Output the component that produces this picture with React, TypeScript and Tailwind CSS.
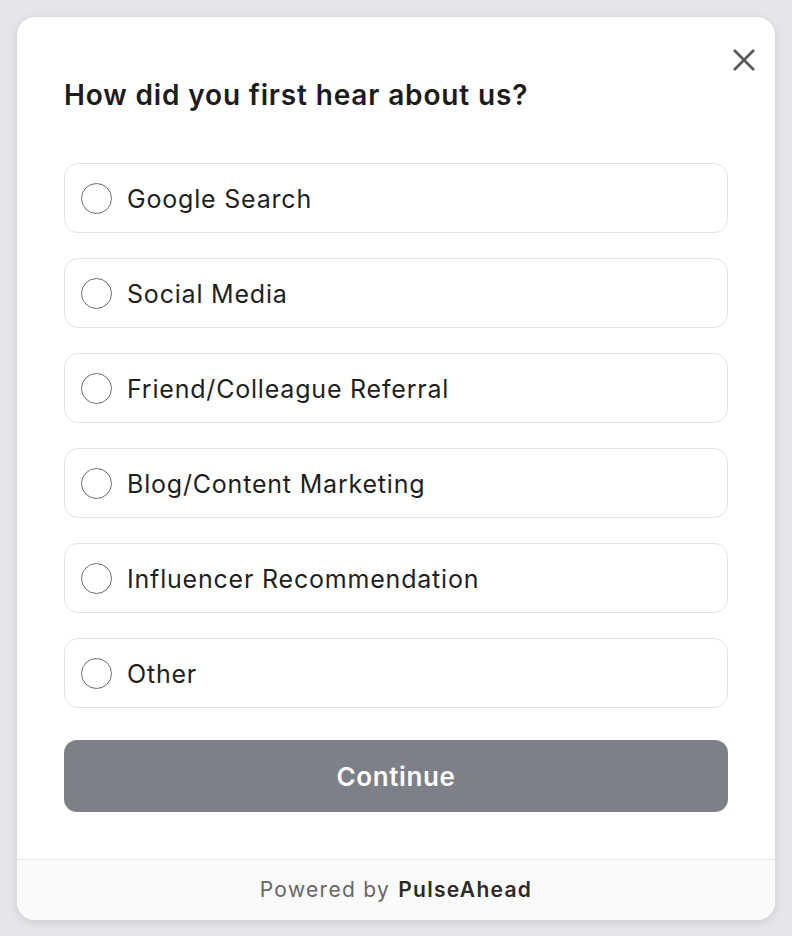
import React, { useState } from 'react';

const options = [
  'Google Search',
  'Social Media',
  'Friend/Colleague Referral',
  'Blog/Content Marketing',
  'Influencer Recommendation',
  'Other',
];

const App: React.FC = () => {
  const [selected, setSelected] = useState<string | null>(null);

  return (
    <div
      className="min-h-screen bg-[#e5e6ea] p-[17px]"
      style={{ fontFamily: 'Inter, "Noto Sans", sans-serif' }}
    >
      <div className="relative w-full rounded-[18px] bg-white shadow-[0_2px_8px_rgba(0,0,0,0.12)] overflow-hidden">
        <button className="absolute right-[14px] top-[26px] p-1 text-[#5a5a5a]">
          <svg width="26" height="26" viewBox="0 0 24 24" fill="none" stroke="currentColor" strokeWidth="2.5" strokeLinecap="round">
            <path d="M3.5 3.5l17 17M20.5 3.5l-17 17" />
          </svg>
        </button>

        <div className="px-[47px] pt-[60px] pb-[47px]">
          <h2 className="text-[28px] leading-[36px] font-semibold text-[#1c1c1e] tracking-[0.85px]">
            How did you first hear about us?
          </h2>

          <div className="mt-[50px] flex flex-col gap-[25px]">
            {options.map((opt) => (
              <label
                key={opt}
                className="flex h-[70px] cursor-pointer items-center gap-[15px] rounded-[14px] border-[1.5px] border-[#e3e3e6] bg-white px-[16px]"
                onClick={() => setSelected(opt)}
              >
                <span
                  className={
                    selected === opt
                      ? 'h-[31px] w-[31px] shrink-0 rounded-full border-[7px] border-[#6b6d75]'
                      : 'h-[31px] w-[31px] shrink-0 rounded-full border-[1.8px] border-[#6e6e6e]'
                  }
                />
                <span className="pt-[3px] text-[25px] tracking-[0.8px] text-[#1f1f1f]">{opt}</span>
              </label>
            ))}
          </div>

          <button className="mt-[32px] h-[72px] w-full rounded-[13px] bg-[#7e8089] text-[26px] font-semibold tracking-[0.6px] text-white">
            Continue
          </button>
        </div>

        <div className="flex h-[61px] items-center justify-center border-t border-[#ececee] bg-[#fafafa] text-[21px] tracking-[1.3px]">
          <span className="text-[#666]">Powered by</span>
          <span className="ml-[8px] font-semibold text-[#2a2a2a]">PulseAhead</span>
        </div>
      </div>
    </div>
  );
};

export default App;
